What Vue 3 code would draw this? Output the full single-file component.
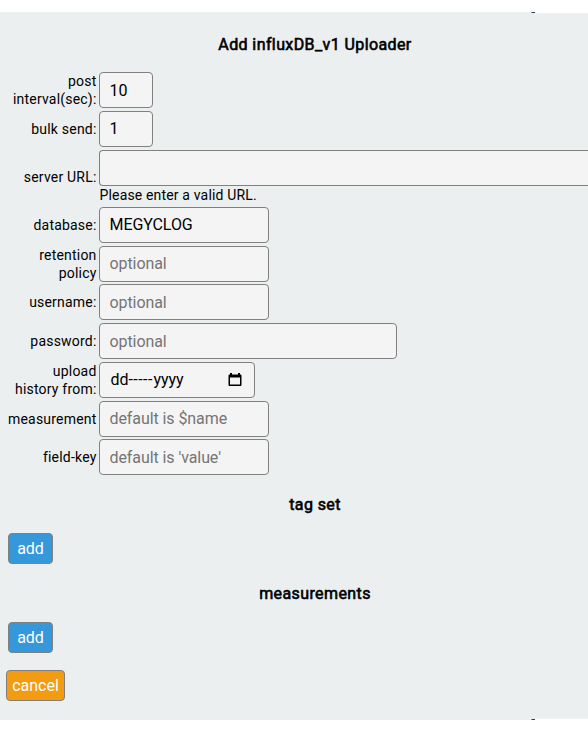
<script setup>
const rows = [
  { label: ['post', 'interval(sec):'], value: '10', size: 'tiny' },
  { label: ['bulk send:'], value: '1', size: 'tiny' },
  { label: ['server URL:'], value: '', size: 'wide', hint: 'Please enter a valid URL.' },
  { label: ['database:'], value: 'MEGYCLOG', size: 'medium' },
  { label: ['retention', 'policy'], placeholder: 'optional', size: 'medium' },
  { label: ['username:'], placeholder: 'optional', size: 'medium' },
  { label: ['password:'], placeholder: 'optional', size: 'large' },
  { label: ['upload', 'history from:'], date: true, size: 'date' },
  { label: ['measurement'], placeholder: 'default is $name', size: 'medium' },
  { label: ['field-key'], placeholder: "default is 'value'", size: 'medium' },
]
</script>

<template>
  <main class="dialog">
    <i class="edge top"></i>
    <i class="edge bottom"></i>
    <h3 class="title"><span>Add influxDB_v1 Uploader</span></h3>
    <div class="form">
      <div v-for="(row, i) in rows" :key="i" class="row" :class="{ hinted: row.hint }">
        <label class="label"><span v-for="line in row.label" :key="line">{{ line }}</span></label>
        <div class="control">
          <div v-if="row.date" class="field date">
            <span class="dd">dd</span><span class="dashes">-----</span><span class="yyyy">yyyy</span>
            <svg class="calendar" width="14" height="15" viewBox="0 0 14 15">
              <path fill="#000" fill-rule="evenodd" d="M2 1h2v1.500h6V1h2v1.500h.5q1 0 1 1V13q0 1-1 1H1.500q-1 0-1-1V3.500q0-1 1-1H2zM2 5.500v7h10v-7z" />
            </svg>
          </div>
          <input v-else class="field" :class="row.size" type="text" :value="row.value" :placeholder="row.placeholder" />
          <div v-if="row.hint" class="hint">{{ row.hint }}</div>
        </div>
      </div>
    </div>
    <h3 class="section tags">tag set</h3>
    <button class="btn add">add</button>
    <h3 class="section measures">measurements</h3>
    <button class="btn add">add</button>
    <button class="btn cancel">cancel</button>
  </main>
</template>

<style>
body {
  background: #fff;
}
</style>

<style scoped>
.dialog {
  position: relative;
  box-sizing: border-box;
  width: 100%;
  height: 708px;
  margin-top: 12px;
  overflow: hidden;
  background: #ebeff0;
  font-family: Roboto, sans-serif;
  color: #000;
  display: flex;
  flex-direction: column;
  align-items: flex-start;
}
.edge {
  position: absolute;
  left: 531px;
  right: 0;
  height: 1px;
  background: linear-gradient(to right, #8f98a1 0 1px, #2c3e50 1px 4px, #fff 4px);
}
.top { top: 0; }
.bottom { bottom: 0; }
.title, .section {
  box-sizing: border-box;
  margin: 0;
  width: 100%;
  padding-left: 42px;
  line-height: 20px;
  font-size: 16px;
  font-weight: 400;
  letter-spacing: 0.4px;
  -webkit-text-stroke: 0.6px #000;
  text-align: center;
}
.title { padding-top: 23px; }
.form {
  padding-top: 17px;
  width: 100%;
}
.row {
  display: flex;
  align-items: center;
  height: 36px;
  margin-bottom: 2.75px;
}
.row.hinted {
  height: 54.5px;
}
.label {
  flex: none;
  width: 96.500px;
  margin-right: 2.500px;
  font-size: 14px;
  line-height: 18px;
  letter-spacing: 0.2px;
  text-align: right;
  white-space: nowrap;
}
.label span { display: block; }
.control {
  flex: 1;
  min-width: 0;
  height: 100%;
}
.field {
  display: block;
  box-sizing: border-box;
  height: 36px;
  margin: 0;
  padding: 0 9.5px;
  border: 1px solid #808080;
  border-radius: 4px;
  background: #f4f4f4;
  font-family: Roboto, sans-serif;
  font-size: 16px;
  letter-spacing: -0.08px;
  color: #000;
  outline: none;
}
.field::placeholder { color: #757575; }
.tiny { width: 54px; }
.medium { width: 170px; }
.large { width: 298px; }
.wide {
  width: 100%;
  border-right: 0;
  border-radius: 4px 0 0 4px;
}
.date {
  width: 156px;
  display: flex;
  align-items: center;
  padding-left: 10.5px;
}
.dd { width: 18px; }
.dashes { width: 25px; letter-spacing: 0.45px; }
.calendar { margin-left: auto; margin-right: 2.500px; }
.hint {
  padding-left: 0.5px;
  font-size: 14px;
  line-height: 18px;
  letter-spacing: 0.16px;
}
.tags { margin-top: 17px; }
.measures { margin-top: 20px; }
.btn {
  box-sizing: border-box;
  height: 31px;
  padding: 1px 0 0;
  border: 1px solid #808080;
  border-radius: 4px;
  color: #fff;
  font-family: Roboto, sans-serif;
  font-size: 16px;
  line-height: 28px;
  flex: none;
}
.add {
  width: 45px;
  margin: 18px 0 0 8px;
  background: #3498db;
}
.cancel {
  width: 59px;
  margin: 17px 0 0 6px;
  background: #f39c12;
}
</style>
